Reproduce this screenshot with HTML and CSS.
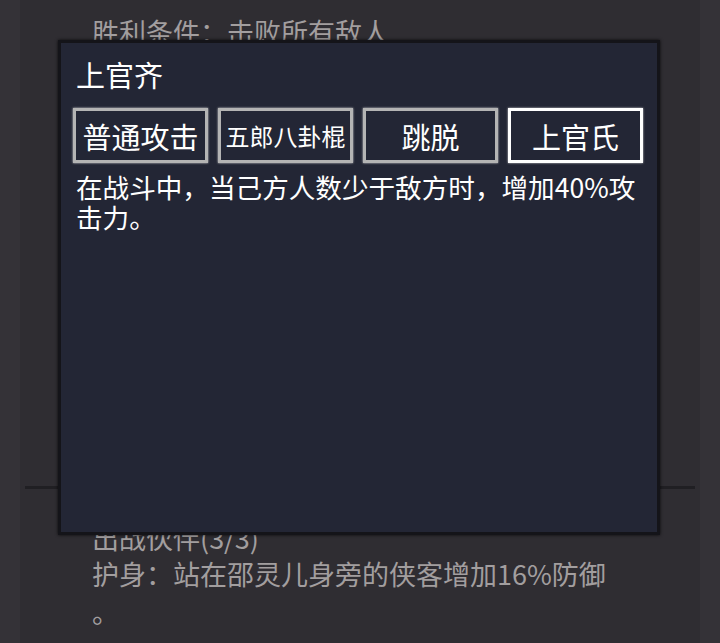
FILE: index.html
```html
<!DOCTYPE html>
<html lang="zh-CN">
<head>
    <meta charset="UTF-8">
    <meta name="viewport" content="width=device-width, initial-scale=1.0">
    <title>上官齐</title>
    <link rel="stylesheet" href="styles.css">
</head>
<body>
    <div class="screen">
        <div class="column">
            <p class="bg-text goal">胜利条件：击败所有敌人</p>
            <div class="divider"></div>
            <p class="bg-text partners">出战伙伴(3/3)</p>
            <p class="bg-text">护身：站在邵灵儿身旁的侠客增加16%防御</p>
            <p class="bg-text">。</p>
        </div>

        <div class="dialog">
            <h2 class="dialog-title">上官齐</h2>
            <div class="skills">
                <button class="skill">普通攻击</button>
                <button class="skill small">五郎八卦棍</button>
                <button class="skill">跳脱</button>
                <button class="skill active">上官氏</button>
            </div>
            <p class="desc">在战斗中，当己方人数少于敌方时，增加40%攻击力。</p>
        </div>
    </div>
</body>
</html>
```

FILE: styles.css
```css
/* General */
body {
    margin: 0;
    background: #343237;
    font-family: "Noto Sans CJK SC", "Noto Sans", sans-serif;
}

.screen {
    position: relative;
    width: 720px;
    height: 643px;
    overflow: hidden;
}

/* Background column */
.column {
    margin: 0 20px;
    height: 643px;
    background: #2f2d32;
    padding-top: 13px;
    box-sizing: border-box;
}

.bg-text {
    margin: 0;
    padding-left: 72px;
    color: #a29e9f;
    font-size: 27px;
    line-height: 38px;
}

.goal {
    margin-bottom: 435px;
}

.divider {
    height: 3px;
    margin: 0 5px;
    background: #201f23;
}

.partners {
    margin-top: 30px;
    margin-bottom: -2px;
}

/* Dialog */
.dialog {
    position: absolute;
    left: 58px;
    top: 40px;
    width: 602px;
    height: 495px;
    box-sizing: border-box;
    background: #232635;
    border: 3px solid #141419;
    box-shadow: 0 0 3px rgba(0, 0, 0, 0.8);
    padding: 11px 12px 0 12px;
}

.dialog-title {
    margin: 0 0 0 3px;
    color: #fff;
    font-size: 29px;
    font-weight: normal;
    line-height: 40px;
}

.skills {
    display: flex;
    gap: 10px;
    margin-top: 14px;
}

.skill {
    width: 135px;
    height: 55px;
    background: #232635;
    border: 3px solid #b4b4b4;
    box-shadow: 0 0 2px #d0d0d0;
    color: #fff;
    font-family: inherit;
    font-size: 29px;
    padding: 0;
}

.skill.small {
    font-size: 24px;
}

.skill.active {
    border-color: #fff;
}

.desc {
    margin: 9px 0 0 3px;
    color: #fff;
    font-size: 26.6px;
    line-height: 30px;
    width: 575px;
}
```
